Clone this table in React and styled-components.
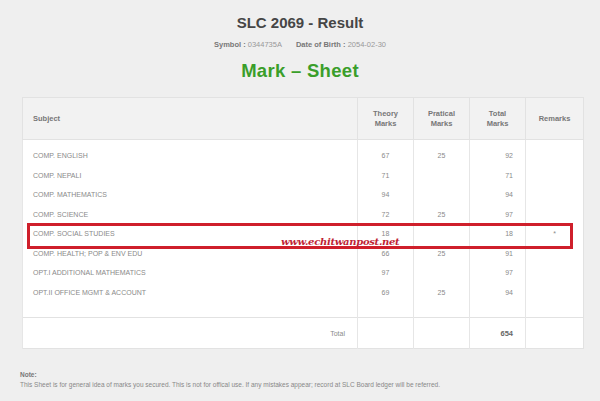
import styled, { createGlobalStyle } from 'styled-components'

const Global = createGlobalStyle`
  html, body {
    margin: 0;
    padding: 0;
    background: #efefef;
    font-family: "Liberation Sans", Arial, sans-serif;
  }
`

const Page = styled.div`
  width: 600px;
  height: 401px;
  overflow: hidden;
  display: flex;
  flex-direction: column;
  align-items: center;
  padding-top: 14px;
  box-sizing: border-box;
`

const Title = styled.h1`
  margin: 0;
  font-size: 15px;
  font-weight: bold;
  color: #464646;
  line-height: 18px;
`

const Meta = styled.div`
  margin-top: 8px;
  font-size: 7.5px;
  color: #999;
  display: flex;
  gap: 14px;
  line-height: 10px;
`

const Label = styled.b`
  color: #777;
`

const SheetTitle = styled.h2`
  margin: 9px 0 0;
  font-size: 18.5px;
  font-weight: bold;
  color: #3a9e2a;
  line-height: 24px;
  letter-spacing: 0.3px;
`

const Wrap = styled.div`
  position: relative;
  margin-top: 14px;
  align-self: flex-start;
  margin-left: 22px;
`

const Table = styled.table`
  width: 561px;
  border-collapse: collapse;
  background: #fff;
  border: 1px solid #e2e2e2;
  font-size: 7px;
  color: #888;
  table-layout: fixed;
`

const Th = styled.th`
  height: 41px;
  background: #f2f2f2;
  border-left: 1px solid #e2e2e2;
  border-bottom: 1px solid #e2e2e2;
  font-size: 7.5px;
  line-height: 10px;
  color: #777;
  text-align: ${(p) => p.$align || 'center'};
  padding: 0 ${(p) => (p.$align === 'left' ? '10px' : '4px')};
  font-weight: bold;
`

const Td = styled.td`
  height: 19.5px;
  padding: 0 ${(p) => p.$pad || '10px'};
  border-left: 1px solid #e6e6e6;
  text-align: ${(p) => p.$align || 'left'};
  vertical-align: middle;
  color: ${(p) => (p.$strong ? '#666' : '#8a8a8a')};
  font-weight: ${(p) => (p.$strong ? 'bold' : 'normal')};
  font-size: ${(p) => (p.$strong ? '7.5px' : '7px')};
`

const BodyRow = styled.tr`
  td {
    padding-top: ${(p) => (p.$first ? '6px' : '0')};
    padding-bottom: ${(p) => (p.$last ? '15px' : '0')};
  }
`

const TotalRow = styled.tr`
  td {
    height: 30px;
    border-top: 1px solid #e2e2e2;
  }
`

const Highlight = styled.div`
  position: absolute;
  left: 5px;
  top: 126px;
  width: 540px;
  height: 20px;
  border: 3px solid #cf1f2b;
  pointer-events: none;
`

const Watermark = styled.div`
  position: absolute;
  left: 259px;
  top: 139px;
  font-family: "DejaVu Serif", serif;
  font-style: italic;
  font-weight: bold;
  font-size: 10px;
  color: #c01f35;
  letter-spacing: -0.3px;
`

const Note = styled.div`
  align-self: flex-start;
  margin: 21px 0 0 20px;
  font-size: 6.5px;
  line-height: 10px;
  color: #888;
`

const rows = [
  ['COMP. ENGLISH', '67', '25', '92', ''],
  ['COMP. NEPALI', '71', '', '71', ''],
  ['COMP. MATHEMATICS', '94', '', '94', ''],
  ['COMP. SCIENCE', '72', '25', '97', ''],
  ['COMP. SOCIAL STUDIES', '18', '', '18', '*'],
  ['COMP. HEALTH; POP & ENV EDU', '66', '25', '91', ''],
  ['OPT.I ADDITIONAL MATHEMATICS', '97', '', '97', ''],
  ['OPT.II OFFICE MGMT & ACCOUNT', '69', '25', '94', ''],
]

const App = () => (
  <Page>
    <Global />
    <Title>SLC 2069 - Result</Title>
    <Meta>
      <span><Label>Symbol :</Label> 0344735A</span>
      <span><Label>Date of Birth :</Label> 2054-02-30</span>
    </Meta>
    <SheetTitle>Mark – Sheet</SheetTitle>
    <Wrap>
      <Table>
        <colgroup>
          <col style={{ width: 335 }} />
          <col style={{ width: 56 }} />
          <col style={{ width: 56 }} />
          <col style={{ width: 56 }} />
          <col style={{ width: 58 }} />
        </colgroup>
        <thead>
          <tr>
            <Th $align='left'>Subject</Th>
            <Th>Theory<br />Marks</Th>
            <Th>Pratical<br />Marks</Th>
            <Th>Total<br />Marks</Th>
            <Th>Remarks</Th>
          </tr>
        </thead>
        <tbody>
          {rows.map(([name, th, pr, tot, rem], i) => (
            <BodyRow key={name} $first={i === 0} $last={i === rows.length - 1}>
              <Td>{name}</Td>
              <Td $align='center' $pad='0'>{th}</Td>
              <Td $align='center' $pad='0'>{pr}</Td>
              <Td $align='right' $pad='12px'>{tot}</Td>
              <Td $align='center' $pad='0'>{rem}</Td>
            </BodyRow>
          ))}
          <TotalRow>
            <Td $align='right' $pad='12px'>Total</Td>
            <Td />
            <Td />
            <Td $align='right' $pad='12px' $strong>654</Td>
            <Td />
          </TotalRow>
        </tbody>
      </Table>
      <Highlight />
      <Watermark>www.echitwanpost.net</Watermark>
    </Wrap>
    <Note>
      <Label>Note:</Label><br />
      This Sheet is for general idea of marks you secured. This is not for offical use. If any mistakes appear; record at SLC Board ledger will be referred.
    </Note>
  </Page>
)

export default App
